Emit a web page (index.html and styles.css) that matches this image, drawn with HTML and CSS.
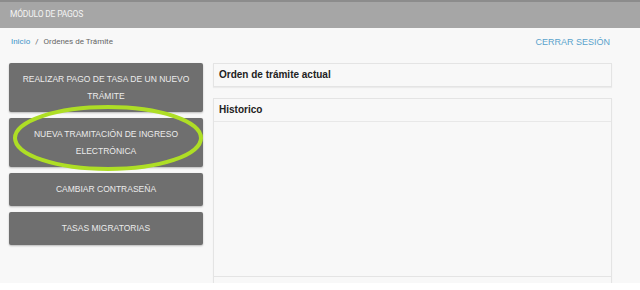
FILE: index.html
```html
<!DOCTYPE html>
<html lang="es">
<head>
    <meta charset="UTF-8">
    <title>Módulo de Pagos</title>
    <link rel="stylesheet" href="styles.css">
</head>
<body>
    <div class="topbar">MÓDULO DE PAGOS</div>
    <div class="subbar">
        <div class="breadcrumb"><a href="#">Inicio</a> <span class="sep">/</span> Ordenes de Trámite</div>
        <a class="logout" href="#">CERRAR SESIÓN</a>
    </div>
    <div class="main">
        <!-- Left: menu -->
        <div class="menu">
            <button class="menu-btn tall">REALIZAR PAGO DE TASA DE UN NUEVO TRÁMITE</button>
            <button class="menu-btn tall">NUEVA TRAMITACIÓN DE INGRESO ELECTRÓNICA</button>
            <button class="menu-btn">CAMBIAR CONTRASEÑA</button>
            <button class="menu-btn">TASAS MIGRATORIAS</button>
            <svg class="mark" width="196" height="72" viewBox="0 0 196 72">
                <ellipse cx="98" cy="35" rx="93" ry="31" fill="none" stroke="#aede25" stroke-width="4"/>
            </svg>
        </div>

        <!-- Right: panels -->
        <div class="content">
            <div class="panel">
                <div class="panel-head">Orden de trámite actual</div>
            </div>
            <div class="panel history">
                <div class="panel-head">Historico</div>
                <div class="panel-body"></div>
                <div class="panel-foot"></div>
            </div>
        </div>
    </div>
</body>
</html>
```

FILE: styles.css
```css
body {
    margin: 0;
    background: #fff;
    font-family: 'Liberation Sans', Arial, sans-serif;
    color: #333;
}

.topbar {
    height: 26px;
    background: #a6a6a6;
    border-top: 2px solid #8c8c8c;
    color: #f4f4f4;
    font-family: Roboto, 'Liberation Sans', sans-serif;
    font-size: 8.5px;
    line-height: 25px;
    padding-left: 10px;
    letter-spacing: -0.2px;
}

.subbar {
    height: 28px;
    background: #f8f8f8;
    display: flex;
    justify-content: space-between;
    align-items: center;
    padding: 0 30px 0 11px;
}

.breadcrumb {
    font-family: Roboto, 'Liberation Sans', sans-serif;
    font-size: 8px;
    color: #666;
    margin-top: -1px;
}

.breadcrumb a {
    color: #3d94c8;
    text-decoration: none;
}

.breadcrumb .sep {
    margin: 0 3px;
}

.logout {
    color: #5aa3cc;
    font-size: 9px;
    text-decoration: none;
    margin-top: -1px;
}

.main {
    display: flex;
    background: #f8f8f8;
    height: 220px;
    padding-top: 7px;
}

.menu {
    position: relative;
    width: 194px;
    padding: 0 10px 0 9px;
    display: flex;
    flex-direction: column;
    gap: 6px;
}

.menu-btn {
    background: #6f6f6f;
    color: #ececec;
    border: none;
    border-radius: 2px;
    box-shadow: 0 1px 2px rgba(0, 0, 0, 0.25);
    font-family: 'Liberation Sans', Arial, sans-serif;
    font-size: 8.5px;
    line-height: 17px;
    height: 33px;
    padding: 0 8px;
}

.menu-btn.tall {
    height: 49px;
}

.mark {
    position: absolute;
    left: 10px;
    top: 40px;
}

.content {
    width: 399px;
    display: flex;
    flex-direction: column;
    gap: 11px;
}

.panel {
    background: #f8f8f8;
    border: 1px solid #e4e4e4;
    box-shadow: 0 1px 1px rgba(0, 0, 0, 0.05);
}

.panel-head {
    height: 22px;
    line-height: 22px;
    padding-left: 5px;
    font-size: 10px;
    font-weight: bold;
    color: #222;
}

.history {
    flex: 1;
    display: flex;
    flex-direction: column;
    border-bottom: none;
}

.history .panel-head {
    border-bottom: 1px solid #e8e8e8;
}

.panel-body {
    flex: 1;
    border-bottom: 1px solid #e4e4e4;
}

.panel-foot {
    height: 6px;
}
```
